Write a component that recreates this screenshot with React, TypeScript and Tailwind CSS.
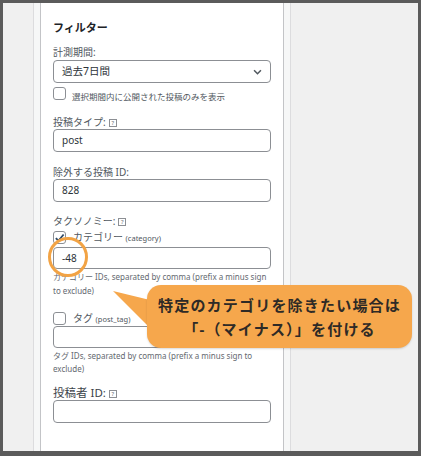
import React from 'react';

const jp = { fontFamily: '"Noto Sans", "Noto Sans CJK JP", sans-serif' };

const Help: React.FC = () => (
  <span className="ml-[3px] inline-flex h-[8px] w-[8px] items-center justify-center border border-[#8c8f94] text-[6px] leading-none text-[#646970] align-middle">
    ?
  </span>
);

const Label: React.FC<{ children: React.ReactNode; className?: string }> = ({ children, className = '' }) => (
  <div className={`h-[14px] text-[10px] leading-[14px] text-[#50575e] ${className}`}>{children}</div>
);

const Field: React.FC<{ value?: string; className?: string }> = ({ value, className = '' }) => (
  <div className={`flex w-[218px] items-center rounded-[4px] border border-[#8c8f94] bg-white pl-[8px] text-[10px] text-[#2c3338] ${className}`}>
    {value}
  </div>
);

const Box: React.FC<{ checked?: boolean }> = ({ checked }) => (
  <div className="flex h-[13px] w-[13px] shrink-0 items-center justify-center rounded-[3px] border border-[#8c8f94] bg-white">
    {checked && (
      <svg width="12" height="12" viewBox="0 0 12 12">
        <path d="M2 6.2 L4.8 9 L10.5 2.2" fill="none" stroke="#2f4a66" strokeWidth="2" />
      </svg>
    )}
  </div>
);

const App: React.FC = () => {
  return (
    <div style={jp} className="relative flex h-[456px] w-[421px] overflow-hidden border-x-[3px] border-t-[3px] border-b-[5px] border-[#5b5b5b] bg-[#f0f0f0]">
      <div className="w-[30px] shrink-0" />
      <div className="w-[258px] shrink-0 border-x border-[#dcdcde] bg-[#f6f7f7] px-[6px]">
        <div className="h-full border-x border-[#c3c4c7] bg-white px-[12px] pt-[15px]">
          <div className="h-[19px] text-[11px] font-bold leading-[19px] text-[#1d2327]">フィルター</div>

          <Label className="mt-[8px]">計測期間:</Label>
          <div className="mt-[1px] flex h-[23px] w-[218px] items-center justify-between rounded-[4px] border border-[#8c8f94] bg-white pl-[8px] pr-[8px] text-[10.5px] text-[#2c3338]">
            <span>過去7日間</span>
            <svg width="9" height="6" viewBox="0 0 10 7">
              <path d="M1 1.5 L5 5.5 L9 1.5" fill="none" stroke="#50575e" strokeWidth="1.8" />
            </svg>
          </div>
          <div className="mt-[4px] flex h-[16px] items-start gap-[6px]">
            <Box />
            <span className="mt-[3px] text-[8.5px] leading-[13px] text-[#50575e]">選択期間内に公開された投稿のみを表示</span>
          </div>

          <Label className="mt-[12px]">
            投稿タイプ:
            <Help />
          </Label>
          <Field value="post" className="h-[23px]" />

          <Label className="mt-[13px]">除外する投稿 ID:</Label>
          <Field value="828" className="h-[23px]" />

          <Label className="mt-[12px]">
            タクソノミー:
            <Help />
          </Label>
          <div className="mt-[3px] flex h-[13px] items-center gap-[7px]">
            <Box checked />
            <span className="text-[10px] leading-[13px] text-[#50575e]">
              カテゴリー <span className="text-[7.5px]">(category)</span>
            </span>
          </div>
          <Field value="-48" className="mt-[3px] h-[22px]" />
          <div className="mt-[1px] whitespace-nowrap text-[8px] leading-[14px] text-[#646970]">
            カテゴリー IDs, separated by comma (prefix a minus sign
            <br />
            to exclude)
          </div>

          <div className="mt-[14px] flex h-[13px] items-center gap-[7px]">
            <Box />
            <span className="text-[10px] leading-[13px] text-[#50575e]">
              タグ <span className="text-[7.5px]">(post_tag)</span>
            </span>
          </div>
          <Field className="mt-[1px] h-[22px]" />
          <div className="mt-[1px] whitespace-nowrap text-[8px] leading-[13px] text-[#646970]">
            タグ IDs, separated by comma (prefix a minus sign to
            <br />
            exclude)
          </div>

          <div className="mt-[11px] h-[14px] text-[11.5px] leading-[14px] text-[#3c434a]">
            投稿者 ID:
            <Help />
          </div>
          <Field className="h-[23px]" />
        </div>
      </div>
      <div className="flex-1" />

      {/* highlight ring */}
      <div className="absolute left-[45px] top-[234px] h-[40px] w-[40px] rounded-full border-[3px] border-[#f2a344]" />

      {/* callout tail */}
      <svg className="absolute left-[107px] top-[285px]" width="50" height="50" viewBox="0 0 50 50">
        <polygon points="3,3 40,12 40,40" fill="#f6a74c" />
      </svg>

      {/* callout */}
      <div className="absolute left-[144px] top-[282px] flex h-[63px] w-[265px] flex-col items-center justify-center rounded-[14px] bg-[#f6a74c] text-[15px] font-bold leading-[24px] tracking-[1.2px] text-[#2e2a26] shadow-[0_1px_2px_rgba(0,0,0,0.15)]">
        <div>特定のカテゴリを除きたい場合は</div>
        <div>「-（マイナス）」を付ける</div>
      </div>
    </div>
  );
};

export default App;
